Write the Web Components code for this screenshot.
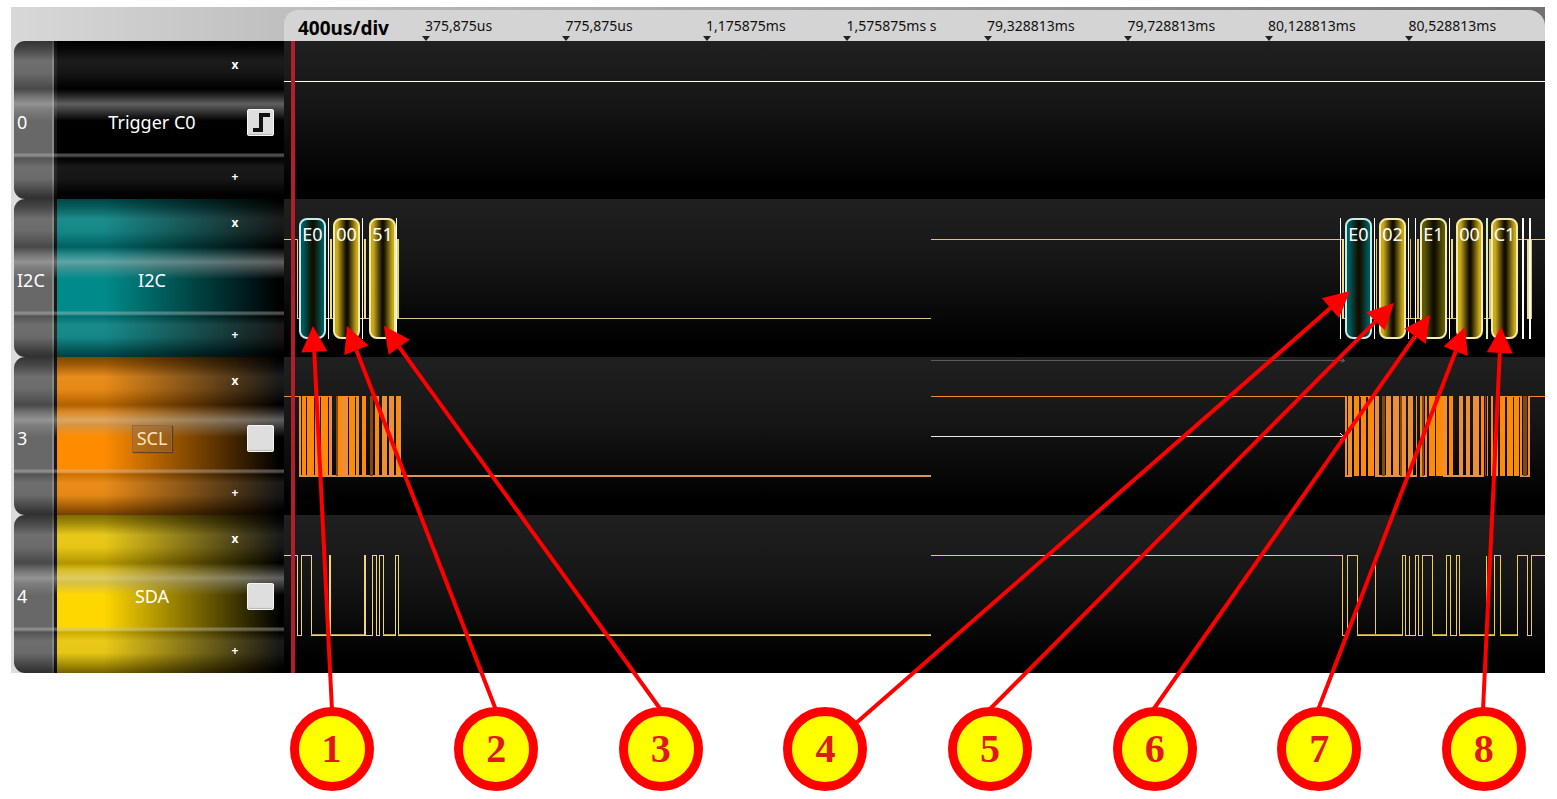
<!DOCTYPE html>
<html lang="en">
<head>
<meta charset="utf-8">
<meta name="viewport" content="width=device-width, initial-scale=1">
<title>I2C capture</title>
<style>
  body {
    margin: 0;
    background: #fff;
    font-family: "Noto Sans", "Open Sans", sans-serif;
  }
</style>
</head>
<body>
<capture-view>
  <time-ruler slot="ruler" scale="400us/div" marks="375,875us|775,875us|1,175875ms|1,575875ms s|79,328813ms|79,728813ms|80,128813ms|80,528813ms"></time-ruler>

  <channel-row index="0" name="Trigger C0" color="#000000" trigger="edge" trace="trigger"></channel-row>

  <channel-row index="I2C" name="I2C" color="#008b8b" trace="bus">
    <bus-byte kind="address" style="--at: 15">E0</bus-byte>
    <bus-byte style="--at: 49">00</bus-byte>
    <bus-byte style="--at: 85">51</bus-byte>
    <bus-byte kind="address" style="--at: 1061">E0</bus-byte>
    <bus-byte style="--at: 1095">02</bus-byte>
    <bus-byte kind="read" style="--at: 1136">E1</bus-byte>
    <bus-byte style="--at: 1172">00</bus-byte>
    <bus-byte style="--at: 1207">C1</bus-byte>
  </channel-row>

  <channel-row index="3" name="SCL" color="#ff8c00" trigger="none" trace="clock" selected></channel-row>
  <channel-row index="4" name="SDA" color="#ffd700" trigger="none" trace="data"></channel-row>

  <callout-badge slot="callouts">1</callout-badge>
  <callout-badge slot="callouts">2</callout-badge>
  <callout-badge slot="callouts">3</callout-badge>
  <callout-badge slot="callouts">4</callout-badge>
  <callout-badge slot="callouts">5</callout-badge>
  <callout-badge slot="callouts">6</callout-badge>
  <callout-badge slot="callouts">7</callout-badge>
  <callout-badge slot="callouts">8</callout-badge>
</capture-view>

<script>
// width of the trace area in trace units
const SPAN = 1261;

const line = (d, color, width = 1) =>
  `<path d="${d}" fill="none" stroke="${color}" stroke-width="${width}"/>`;

const bar = (x, y, w, h, color) =>
  `<rect x="${x}" y="${y}" width="${w}" height="${h}" fill="${color}"/>`;

// [start, width, shade] of every clock pulse
const CLOCK = [
  [15, 2, "l"], [18, 4, "o"], [23, 7, "o"], [31, 5, "o"], [37, 7, "o"], [45, 3, "l"],
  [52, 2, "b"], [54, 4, "o"], [58, 6, "l"], [65, 6, "o"], [72, 3, "l"], [78, 4, "o"],
  [86, 3, "b"], [91, 4, "o"], [98, 5, "l"], [105, 5, "l"], [112, 3, "o"], [115, 2, "l"],
  [1061, 2, "l"], [1064, 4, "l"], [1070, 5, "o"], [1077, 5, "o"], [1084, 6, "o"], [1091, 4, "l"],
  [1098, 3, "b"], [1102, 5, "l"], [1109, 6, "l"], [1116, 2, "b"], [1118, 4, "l"], [1124, 5, "l"],
  [1132, 1, "l"], [1136, 2, "l"], [1138, 2, "b"], [1141, 2, "o"], [1145, 6, "o"], [1152, 7, "o"],
  [1159, 4, "l"], [1165, 4, "o"], [1175, 4, "l"], [1182, 4, "l"], [1189, 6, "l"], [1197, 3, "o"],
  [1201, 1, "b"], [1203, 1, "l"], [1207, 2, "o"], [1212, 2, "l"], [1216, 5, "o"], [1223, 6, "o"],
  [1230, 5, "o"], [1236, 2, "l"], [1239, 4, "b"], [1244, 2, "l"]
];
const CLOCK_SHADES = { o: "#fd8b0a", l: "#ea9038", b: "#86450f" };

const TRACES = {
  trigger() {
    return line("M0 40.5H1261", "#fffff0");
  },

  bus() {
    const gold = "#e3c566";
    const cream = "#efd98c";
    const stops = [44, 78, 112, 1056, 1090, 1124, 1131, 1165, 1238, 1245];
    return (
      line("M0 40.5H13.5V119.5H647", "#e8c583") +
      line("M647 40.5H1058.5V119.5H1061M1243.5 40.5V119.5H1247.5V40.5H1261", gold) +
      line("M1087 119.5H1092M1122 119.5H1136M1163 119.5H1172M1200 119.5H1208M1234 40.5H1243", gold) +
      bar(46, 40, 2, 79, cream) + bar(80, 40, 2, 79, cream) + bar(109, 40, 6, 79, "#e2d567") +
      bar(1058, 40, 2, 79, cream) + bar(1092, 40, 1, 79, gold) + bar(1126, 40, 1, 79, gold) +
      bar(1133, 40, 2, 79, gold) + bar(1167, 40, 2, 79, cream) + bar(1205, 40, 2, 79, gold) +
      bar(1243, 40, 2, 79, cream) +
      stops.map((x) => bar(x, 19, x > 1200 ? 2 : 1, 121, "#fff")).join("") +
      bar(1202, 19, 2, 121, "#d8efc4")
    );
  },

  clock() {
    return (
      line("M0 39.5H16M20 39.5H48M52 39.5H74M647 39.5H1062M1076 39.5H1094M1145 39.5H1162M1216 39.5H1236M1246 39.5H1261", "#f08a30") +
      line("M15 119H647M1061 119H1068M1091 119H1133M1136 119H1143M1159 119H1200M1236 119H1246", "#dc9358", 2) +
      CLOCK.map(([x, w, s]) => bar(x, 39, w, 80, CLOCK_SHADES[s])).join("") +
      line("M647 3.5H1060M1057 1L1060 3.5L1057 6", "#5a5a5a") +
      line("M647 79.5H1060M1056 76L1060 79.5L1056 83", "#e8e8e8")
    );
  },

  data() {
    // each pair is where the line rises and where it falls again
    const early = [
      [17, 27], [45, 46], [80, 81], [88, 92], [95, 99], [111, 114]
    ];
    const late = [
      [1063, 1073], [1091, 1091], [1118, 1121], [1125, 1125], [1131, 1134], [1138, 1148],
      [1162, 1166], [1172, 1175], [1202, 1202], [1210, 1216], [1233, 1243]
    ];
    const walk = (list) =>
      list.map(([up, down]) => `H${up}.5V40.5H${down}.5V120.5`).join("");
    return (
      line(`M0 40.5H13.5V120.5${walk(early)}H647`, "#eed776") +
      line(`M647 40.5H1058.5V120.5${walk(late)}H1247.5V40.5H1261`, "#ecd048") +
      line("M27 119.5H80M99 119.5H111M114 119.5H647", "#b59c56") +
      line("M1073 119.5H1118M1148 119.5H1162M1175 119.5H1210M1216 119.5H1233", "#b59c32")
    );
  }
};

class TimeRuler extends HTMLElement {
  constructor() {
    super();
    this.attachShadow({ mode: "open" });
  }

  connectedCallback() {
    const marks = this.getAttribute("marks").split("|");
    this.shadowRoot.innerHTML = `
      <style>
        :host {
          display: block;
          padding-top: 3px;
          background: linear-gradient(90deg, #d8d8d8, #bcbcbc 20%, #9a9a9a 60%, #747074);
        }

        .scale {
          display: grid;
          grid-template-columns: 141px repeat(7, 141fr) 137fr;
          grid-template-rows: 31px;
          margin-left: 273px;
          border-radius: 14px 16px 0 0;
          background: #d4d4d4;
          color: #111;
          white-space: nowrap;
        }

        strong {
          padding-left: 14px;
          font-size: 19px;
          line-height: 36px;
          color: #000;
        }

        span {
          position: relative;
          font-size: 14px;
          line-height: 32px;
        }

        span::after {
          content: "";
          position: absolute;
          left: -3px;
          bottom: 0;
          border: 4px solid transparent;
          border-top: 5px solid #222;
          border-bottom: 0;
        }
      </style>
      <div class="scale">
        <strong>${this.getAttribute("scale")}</strong>
        ${marks.map((mark) => `<span>${mark}</span>`).join("")}
      </div>
    `;
  }
}

class BusByte extends HTMLElement {
  constructor() {
    super();
    this.attachShadow({ mode: "open" });
    this.shadowRoot.innerHTML = `
      <style>
        :host {
          --edge: #c9a91c;
          --rim: #f3eda4;
          position: absolute;
          top: 19px;
          left: calc(var(--at) / ${SPAN} * 100%);
          box-sizing: border-box;
          width: 27px;
          height: 121px;
          border: 2px solid var(--rim);
          border-radius: 8px;
          background: linear-gradient(90deg, var(--edge) 10%, #120e00 48%, #120e00 56%, var(--edge) 94%);
          color: #fff;
          font-size: 18px;
          line-height: 28px;
          display: flex;
          justify-content: center;
        }

        :host([kind="address"]) {
          --edge: #00595b;
          --rim: #c4eeee;
        }

        :host([kind="read"]) {
          --edge: #5e5a08;
          --rim: #efeeb8;
        }
      </style>
      <slot></slot>
    `;
  }
}

class ChannelRow extends HTMLElement {
  constructor() {
    super();
    this.attachShadow({ mode: "open" });
  }

  connectedCallback() {
    const name = this.getAttribute("name");
    const trigger = this.getAttribute("trigger");
    const edge = `<svg viewBox="0 0 27 27" width="27" height="27" aria-hidden="true">
        <path d="M6 21H14V6H23" fill="none" stroke="#111" stroke-width="4"/>
      </svg>`;

    this.shadowRoot.innerHTML = `
      <style>
        :host {
          display: grid;
          grid-template-columns: 273px 1fr;
          color: #fff;
          font-size: 18px;
        }

        .panel {
          position: relative;
          display: grid;
          grid-template-columns: 43px 1fr 27px;
          grid-template-rows: 48px 66px 44px;
          align-items: center;
          margin-left: 3px;
          padding-right: 10px;
          border-radius: 11px 0 0 11px;
          background:
            linear-gradient(
              rgba(0,0,0,.5), rgba(20,20,20,.4) 8px, rgba(140,140,140,.2) 20px,
              rgba(120,120,120,.18) 32px, rgba(0,0,0,.3) 48px, rgba(130,130,130,.3) 55px,
              rgba(190,190,190,.5) 63px, rgba(160,160,160,.42) 68px, rgba(0,0,0,0) 80px,
              rgba(0,0,0,0) 112px, rgba(190,190,190,.4) 113px,
              rgba(190,190,190,.4) 115px, rgba(0,0,0,.2) 117px, rgba(140,140,140,.18) 126px,
              rgba(120,120,120,.18) 138px, rgba(0,0,0,.45) 154px, rgba(0,0,0,.55)
            ),
            linear-gradient(90deg, #686868 38px, #8a8a8a 38px 40px, #151515 40px 43px, transparent 43px),
            linear-gradient(90deg, var(--channel) 90px, #000 266px);
        }

        .index {
          grid-area: 2 / 1;
          padding-left: 3px;
        }

        button {
          padding: 0;
          border: 0;
          background: none;
          color: inherit;
          font: inherit;
          cursor: pointer;
        }

        .name {
          grid-area: 2 / 2;
          justify-self: center;
          padding: 0 4px;
          border: 1px solid transparent;
          line-height: 25px;
        }

        :host([selected]) .name {
          border-color: #8b6a45;
          background: rgba(140,100,60,.35);
          color: #fbe3c4;
          box-shadow: 1px 1px 1px rgba(60,50,40,.7);
        }

        .size {
          justify-self: end;
          width: 12px;
          margin-right: 6px;
          font-size: 12px;
          font-weight: 700;
          line-height: 12px;
        }

        .less { grid-area: 1 / 2; }
        .more { grid-area: 3 / 2; }

        .trigger {
          grid-area: 2 / 3;
          width: 27px;
          height: 27px;
          border-radius: 3px;
          background: #dedede;
          box-shadow: inset 0 0 0 1px #f6f6f6, inset 0 -2px 1px #b5b5b5;
        }

        .trigger svg {
          display: block;
        }

        .trace {
          position: relative;
          background: linear-gradient(#202020, #161616 40%, #000 92%);
        }

        .trace svg {
          display: block;
          width: 100%;
          height: 158px;
          shape-rendering: crispEdges;
        }
      </style>

      <div class="panel" style="--channel: ${this.getAttribute("color")}">
        <span class="index">${this.getAttribute("index")}</span>
        <button class="size less" aria-label="Shrink ${name}">x</button>
        <button class="name">${name}</button>
        <button class="size more" aria-label="Grow ${name}">+</button>
        ${trigger ? `<button class="trigger" aria-label="Trigger on ${name}">${trigger === "edge" ? edge : ""}</button>` : ""}
      </div>
      <div class="trace">
        <svg viewBox="0 0 ${SPAN} 158" preserveAspectRatio="none" aria-hidden="true">
          ${TRACES[this.getAttribute("trace")]()}
        </svg>
        <slot></slot>
      </div>
    `;
  }
}

class CalloutBadge extends HTMLElement {
  constructor() {
    super();
    this.attachShadow({ mode: "open" });
    this.shadowRoot.innerHTML = `
      <style>
        :host {
          display: flex;
          align-items: center;
          justify-content: center;
          box-sizing: border-box;
          width: 84px;
          height: 84px;
          border: 9px solid #f00;
          border-radius: 50%;
          background: #ff0;
          color: #e01818;
          font: bold 40px/40px "Liberation Serif", serif;
        }
      </style>
      <slot></slot>
    `;
  }
}

// callout pointers: [from x, from y, tip x, tip y]
const POINTERS = [
  [332, 710, 313, 326],
  [496, 710, 347, 326],
  [661, 710, 384, 326],
  [855, 724, 1350, 291],
  [989, 710, 1394, 303],
  [1153, 710, 1430, 315],
  [1318, 710, 1465, 327],
  [1483, 710, 1501, 327]
];

class CaptureView extends HTMLElement {
  constructor() {
    super();
    this.attachShadow({ mode: "open" });
    this.shadowRoot.innerHTML = `
      <style>
        :host {
          display: block;
          position: relative;
          padding: 7px 0 8px;
        }

        .capture {
          position: relative;
          margin: 0 12px 0 11px;
          background: #dcdcdc;
        }

        .cursor {
          position: absolute;
          top: 34px;
          bottom: 0;
          left: 280px;
          width: 4px;
          background: #b0202c;
        }

        .callouts {
          display: flex;
          justify-content: space-between;
          margin: 34px 2% 0 18.6%;
        }

        .pointers {
          position: absolute;
          inset: 0;
          width: 100%;
          height: 100%;
          pointer-events: none;
        }
      </style>
      <div class="capture">
        <slot name="ruler"></slot>
        <slot></slot>
        <div class="cursor"></div>
      </div>
      <div class="callouts"><slot name="callouts"></slot></div>
      <svg class="pointers" viewBox="0 0 1557 799" preserveAspectRatio="none" aria-hidden="true">
        ${POINTERS.map((p) => this.pointer(...p)).join("")}
      </svg>
    `;
  }

  pointer(x1, y1, x2, y2) {
    const length = Math.hypot(x2 - x1, y2 - y1);
    const ux = (x2 - x1) / length;
    const uy = (y2 - y1) / length;
    // middle of the arrow head's base
    const bx = x2 - ux * 26;
    const by = y2 - uy * 26;
    return `
      <line x1="${x1}" y1="${y1}" x2="${bx}" y2="${by}" stroke="#f00" stroke-width="4"/>
      <polygon fill="#f00" points="${x2},${y2} ${bx - uy * 13},${by + ux * 13} ${bx + uy * 13},${by - ux * 13}"/>
    `;
  }
}

customElements.define("time-ruler", TimeRuler);
customElements.define("bus-byte", BusByte);
customElements.define("channel-row", ChannelRow);
customElements.define("callout-badge", CalloutBadge);
customElements.define("capture-view", CaptureView);
</script>
</body>
</html>
